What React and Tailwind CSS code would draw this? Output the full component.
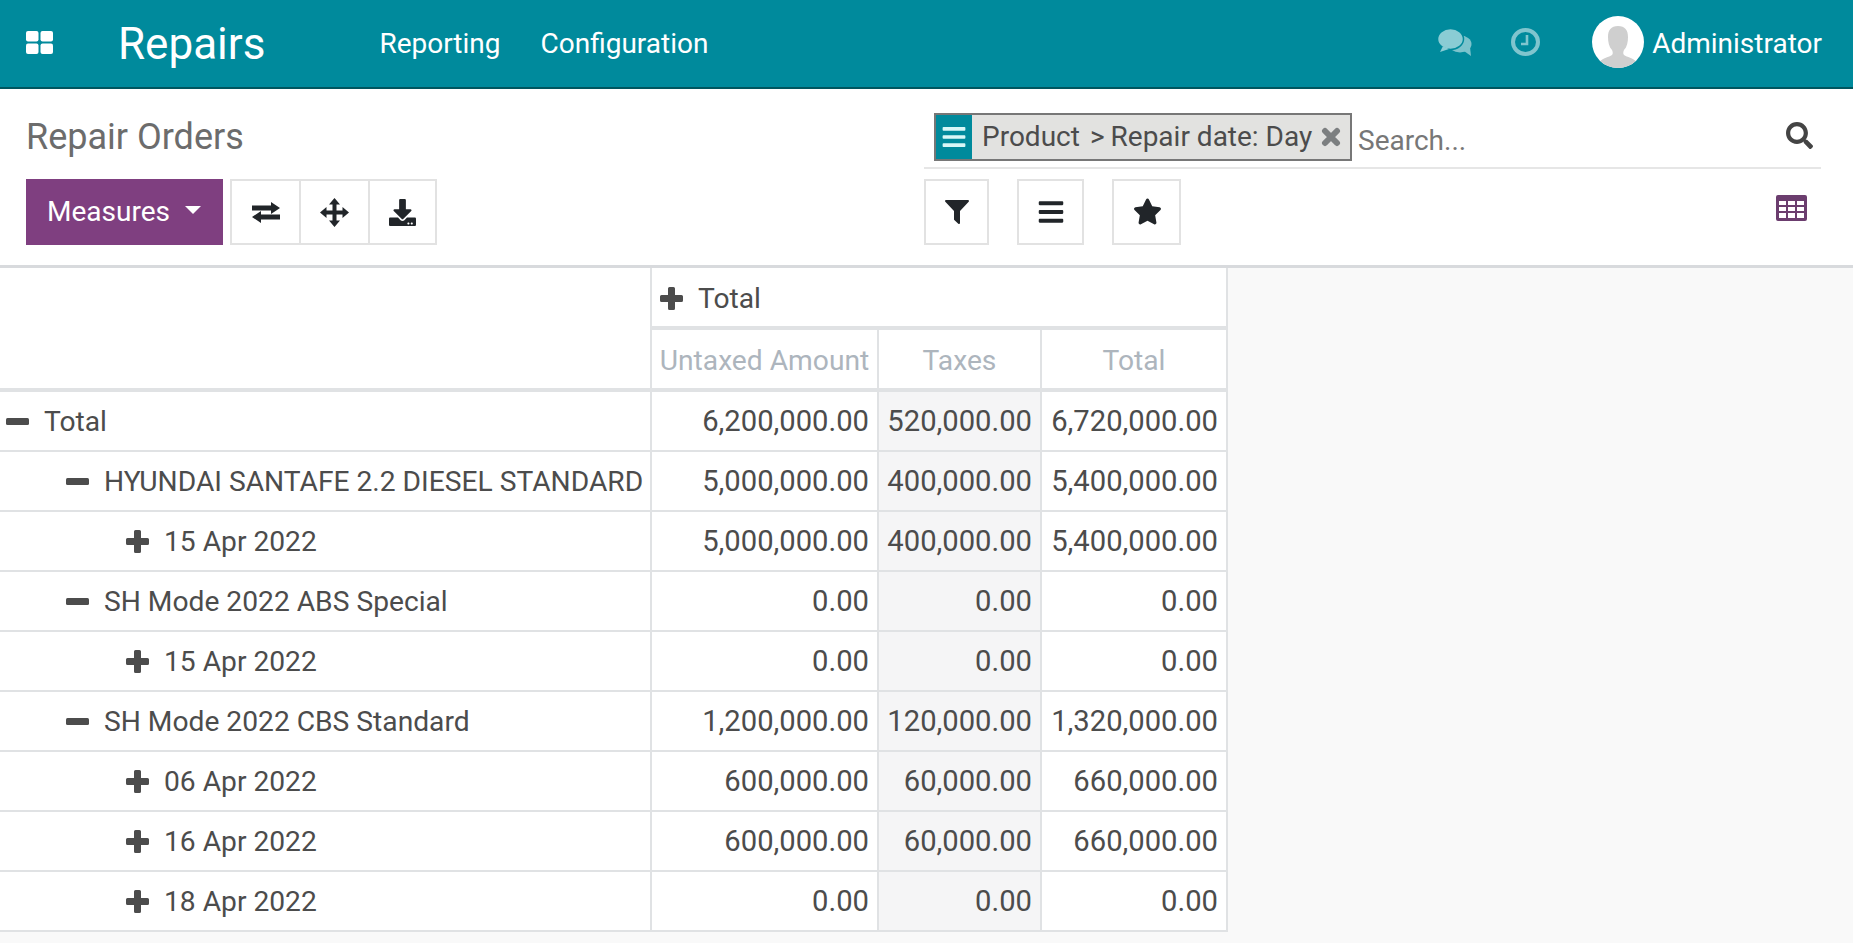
import React from 'react';
import { FaBars, FaDownload, FaSearch, FaStar } from 'react-icons/fa';

const rows = [
    { label: 'Total', level: 0, open: true, values: ['6,200,000.00', '520,000.00', '6,720,000.00'] },
    { label: 'HYUNDAI SANTAFE 2.2 DIESEL STANDARD', level: 1, open: true, values: ['5,000,000.00', '400,000.00', '5,400,000.00'] },
    { label: '15 Apr 2022', level: 2, values: ['5,000,000.00', '400,000.00', '5,400,000.00'] },
    { label: 'SH Mode 2022 ABS Special', level: 1, open: true, values: ['0.00', '0.00', '0.00'] },
    { label: '15 Apr 2022', level: 2, values: ['0.00', '0.00', '0.00'] },
    { label: 'SH Mode 2022 CBS Standard', level: 1, open: true, values: ['1,200,000.00', '120,000.00', '1,320,000.00'] },
    { label: '06 Apr 2022', level: 2, values: ['600,000.00', '60,000.00', '660,000.00'] },
    { label: '16 Apr 2022', level: 2, values: ['600,000.00', '60,000.00', '660,000.00'] },
    { label: '18 Apr 2022', level: 2, values: ['0.00', '0.00', '0.00'] },
];

const indent = ['pl-[6px]', 'pl-[66px]', 'pl-[126px]'];

const PlusIcon = () => (
    <svg viewBox="0 0 23 23" className="w-[23px] h-[23px] shrink-0" fill="currentColor">
        <path d="M9.5 0h4a1.5 1.5 0 0 1 1.5 1.5V8h6.5A1.5 1.5 0 0 1 23 9.5v4a1.5 1.5 0 0 1-1.5 1.5H15v6.5a1.5 1.5 0 0 1-1.5 1.5h-4A1.5 1.5 0 0 1 8 21.5V15H1.5A1.5 1.5 0 0 1 0 13.5v-4A1.5 1.5 0 0 1 1.5 8H8V1.5A1.5 1.5 0 0 1 9.5 0z" />
    </svg>
);

const MinusIcon = () => (
    <svg viewBox="0 0 23 23" className="w-[23px] h-[23px] shrink-0" fill="currentColor">
        <rect x="0" y="8" width="23" height="7" rx="1.5" />
    </svg>
);

const AppsIcon = () => (
    <svg viewBox="0 0 27 23" className="ml-[26px] w-[27px] h-[23px] -mt-[2px]" fill="currentColor">
        <rect x="0" y="0" width="12.5" height="10.5" rx="2" />
        <rect x="14.5" y="0" width="12.5" height="10.5" rx="2" />
        <rect x="0" y="12.5" width="12.5" height="10.5" rx="2" />
        <rect x="14.5" y="12.5" width="12.5" height="10.5" rx="2" />
    </svg>
);

const FilterIcon = () => (
    <svg viewBox="0 0 24 24" className="w-[24px] h-[24px]" fill="currentColor">
        <path d="M1 0h22a1 1 0 0 1 .7 1.7L15 11v12a1 1 0 0 1-1.7.7L9.3 20a1 1 0 0 1-.3-.7V11L.3 1.7A1 1 0 0 1 1 0z" />
    </svg>
);

const ChatIcon = () => (
    <svg viewBox="0 0 35 28" className="w-[35px] h-[28px] -mt-[4px]">
        <ellipse cx="23" cy="16" rx="11.5" ry="8.5" fill="#7cc3cc" />
        <path d="M27 23l7 5-1-9z" fill="#7cc3cc" />
        <ellipse cx="13.5" cy="11" rx="13" ry="10.5" fill="#8accd4" stroke="#008a9c" strokeWidth="1.5" />
        <path d="M6 18l-3 6 9-3z" fill="#8accd4" />
    </svg>
);

const ClockIcon = () => (
    <svg viewBox="0 0 29 28" className="ml-[39px] w-[29px] h-[28px] -mt-[4px]" fill="none" stroke="#80c5ce">
        <ellipse cx="14.5" cy="14" rx="12.5" ry="12" strokeWidth="4" />
        <path d="M16 7v9h-6" strokeWidth="2.6" />
    </svg>
);

const ExchangeIcon = () => (
    <svg viewBox="0 0 30 21" className="w-[30px] h-[21px]" fill="currentColor">
        <path d="M1 3.5h19V0l9 6-9 6V8.5H1z" />
        <path d="M29 12.5H10V9l-9 6 9 6v-3.500h19z" />
    </svg>
);

const MoveIcon = () => (
    <svg viewBox="0 0 29 29" className="w-[29px] h-[29px]" fill="currentColor">
        <path d="M14.5 0l5.500 6.500h-3.500v6h6V9l6.500 5.500L22.500 20v-3.500h-6v6H20L14.500 29 9 22.500h3.500v-6h-6V20L0 14.500 6.500 9v3.500h6v-6H9z" />
    </svg>
);

const CloseIcon = () => (
    <svg viewBox="0 0 20 20" className="ml-[9px] mt-[12px] w-[20px] h-[20px] shrink-0" fill="none" stroke="#7c7f80" strokeWidth="6" strokeLinecap="round">
        <path d="M4 4l12 12M16 4L4 16" />
    </svg>
);

const Avatar = () => (
    <div className="w-[52px] h-[52px] rounded-full bg-white overflow-hidden">
        <svg viewBox="0 0 52 52" className="w-full h-full">
            <path
                d="M26 10c-7 0-10 4-10 11 0 5 1 10 4 13 1 2 1 4 0 5-3 2-9 3-13 7 4 4 11 6 19 6s15-2 19-6c-4-4-10-5-13-7-1-1-1-3 0-5 3-3 4-8 4-13 0-7-3-11-10-11z"
                fill="#cfcfcf"
            />
        </svg>
    </div>
);

const Navbar = () => (
    <nav className="h-[89px] bg-[#008a9c] border-b-2 border-[#00565f] flex items-center text-white">
        <AppsIcon />
        <span className="ml-[65px] text-[44px] leading-none">Repairs</span>
        <span className="ml-[114px] text-[28px]">Reporting</span>
        <span className="ml-[40px] text-[28px]">Configuration</span>
        <div className="ml-auto flex items-center pr-[31px]">
            <ChatIcon />
            <ClockIcon />
            <div className="ml-[52px] -mt-[4px]">
                <Avatar />
            </div>
            <span className="ml-[8px] text-[28px]">Administrator</span>
        </div>
    </nav>
);

const IconButton = ({ children, className }) => (
    <button className={`h-[66px] flex items-center justify-center border-2 border-[#e2e2e2] text-[#212529] bg-white ${className}`}>
        {children}
    </button>
);

const ControlPanel = () => (
    <div className="h-[179px] bg-white border-b-[3px] border-[#d8dadd] flex px-[26px] text-[#212529]">
        <div className="w-[898px]">
            <h1 className="mt-[23px] h-[67px] text-[36px] leading-[50px] text-[#6c6c6c]">Repair Orders</h1>
            <div className="flex">
                <button className="w-[197px] h-[66px] bg-[#7f3f80] text-white text-[28px] flex items-center pl-[21px]">
                    Measures
                    <span className="ml-[15px] mb-[4px] w-0 h-0 border-x-[8px] border-x-transparent border-t-[8px] border-t-white" />
                </button>
                <div className="ml-[7px] flex">
                    <IconButton className="w-[71px]">
                        <ExchangeIcon />
                    </IconButton>
                    <IconButton className="w-[71px] -ml-[2px]">
                        <MoveIcon />
                    </IconButton>
                    <IconButton className="w-[69px] -ml-[2px]">
                        <FaDownload className="w-[27px] h-[27px]" />
                    </IconButton>
                </div>
            </div>
        </div>
        <div className="w-[897px]">
            <div className="mt-[24px] h-[56px] border-b-2 border-[#e6e6e6] flex items-start pl-[10px]">
                <div className="h-[48px] w-[418px] flex border-2 border-[#777] bg-[#e2e2e0] text-[#4c4c4c] text-[28px] leading-[44px] whitespace-nowrap">
                    <div className="w-[36px] bg-[#008a9c] flex items-center justify-center text-[#d8f7f7]">
                        <FaBars className="w-[26px] h-[26px]" />
                    </div>
                    <span className="ml-[10px]">Product</span>
                    <span className="ml-[10px]">&gt;</span>
                    <span className="ml-[6px]">Repair date: Day</span>
                    <CloseIcon />
                </div>
                <span className="ml-[6px] mt-[8px] text-[28px] leading-[40px] text-[#777]">Search...</span>
                <FaSearch className="ml-auto mt-[9px] mr-[8px] w-[27px] h-[27px] text-[#444]" />
            </div>
            <div className="mt-[10px] flex items-start">
                <IconButton className="w-[65px]">
                    <FilterIcon />
                </IconButton>
                <IconButton className="ml-[28px] w-[67px]">
                    <FaBars className="w-[28px] h-[28px]" />
                </IconButton>
                <IconButton className="ml-[28px] w-[69px]">
                    <FaStar className="w-[29px] h-[29px] -mt-[2px] ml-[1px]" />
                </IconButton>
                <svg viewBox="0 0 31 26" className="ml-auto mr-[14px] mt-[16px] w-[31px] h-[26px]">
                    <path
                        fillRule="evenodd"
                        fill="#6b3d6e"
                        d="M2 0h27a2 2 0 0 1 2 2v22a2 2 0 0 1-2 2H2a2 2 0 0 1-2-2V2a2 2 0 0 1 2-2zM3 6v4h7V6zm9 0v4h7V6zm9 0v4h7V6zM3 12v4h7v-4zm9 0v4h7v-4zm9 0v4h7v-4zM3 18v5h7v-5zm9 0v5h7v-5zm9 0v5h7v-5z"
                    />
                </svg>
            </div>
        </div>
    </div>
);

const cell = 'border-r-2 border-b-2 border-[#e0e2e4] pt-[2px]';

const PivotTable = () => (
    <table className="table-fixed w-[1228px] border-separate border-spacing-0 text-[28.2px] text-[#4c4c4c] bg-white">
        <colgroup>
            <col className="w-[652px]" />
            <col className="w-[227px]" />
            <col className="w-[163px]" />
            <col className="w-[186px]" />
        </colgroup>
        <thead>
            <tr>
                <th rowSpan={2} className="border-r-2 border-b-4 border-[#e0e2e4]" />
                <th colSpan={3} className="h-[62px] border-r-2 border-b-4 border-[#e0e2e4] text-left font-normal pl-[8px] pt-[4px]">
                    <span className="flex items-center">
                        <PlusIcon />
                        <span className="ml-[15px]">Total</span>
                    </span>
                </th>
            </tr>
            <tr>
                {['Untaxed Amount', 'Taxes', 'Total'].map((name) => (
                    <th key={name} className="h-[62px] border-r-2 border-b-4 border-[#e0e2e4] font-normal text-[#adb5bd] text-center pt-[4px]">
                        {name}
                    </th>
                ))}
            </tr>
        </thead>
        <tbody>
            {rows.map((row, i) => (
                <tr key={i}>
                    <td className={`h-[60px] ${cell} ${indent[row.level]}`}>
                        <span className="flex items-center whitespace-nowrap">
                            {row.open ? <MinusIcon /> : <PlusIcon />}
                            <span className="ml-[15px]">{row.label}</span>
                        </span>
                    </td>
                    {row.values.map((value, j) => (
                        <td key={j} className={`${cell} text-[29.2px] text-right pr-[8px] ${j === 1 ? 'bg-[#f5f5f6]' : ''}`}>
                            {value}
                        </td>
                    ))}
                </tr>
            ))}
        </tbody>
    </table>
);

export default function App() {
    return (
        <div className="h-[943px] w-[1853px] overflow-hidden flex flex-col bg-[#f9f9f9] font-[Roboto,sans-serif]">
            <Navbar />
            <ControlPanel />
            <PivotTable />
        </div>
    );
}
